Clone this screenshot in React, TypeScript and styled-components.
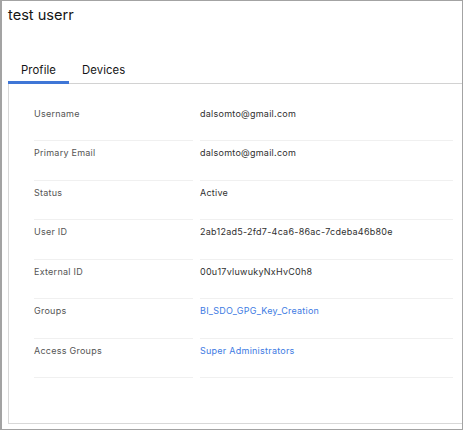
import React from "react";
import styled, { createGlobalStyle } from "styled-components";

const GlobalStyle = createGlobalStyle`
  html, body {
    margin: 0;
    padding: 0;
    background: #ffffff;
  }
  body {
    font-family: Inter, "Noto Sans", "Liberation Sans", sans-serif;
    color: #151515;
  }
`;

const Frame = styled.div`
  box-sizing: border-box;
  width: 463px;
  height: 430px;
  border: 1px solid #a3a3a3;
  border-left-width: 2px;
  overflow: hidden;
  display: flex;
  flex-direction: column;
  padding: 0 0 5px 6px;
`;

const Title = styled.h1`
  margin: 0;
  padding: 3px 0 0 0;
  font-size: 14.6px;
  font-weight: 400;
  line-height: 22px;
  color: #151515;
`;

const TabBar = styled.div`
  display: flex;
  margin-top: 35px;
  border-bottom: 1px solid #d2d2d2;
`;

const Tab = styled.button<{ $active?: boolean }>`
  appearance: none;
  background: none;
  border: none;
  margin: 0 0 -1px 0;
  padding: 0 13px 2px;
  font-family: inherit;
  font-size: 11.3px;
  letter-spacing: 0.1px;
  line-height: 18px;
  color: #151515;
  border-bottom: 3px solid ${(p) => (p.$active ? "#3f76d6" : "transparent")};
  cursor: pointer;
`;

const Card = styled.div`
  flex: 1;
  border-left: 1px solid #d8d8d8;
  border-bottom: 1px solid #d8d8d8;
  padding: 17.5px 9px 0 25px;
`;

const Details = styled.dl`
  margin: 0;
  display: grid;
  grid-template-columns: 159px 1fr;
  column-gap: 7px;
`;

const Label = styled.dt`
  padding: 4px 0 18.5px;
  line-height: 16px;
  font-size: 9px;
  letter-spacing: 0.25px;
  color: #555555;
  border-bottom: 1px solid #f0f0f0;
`;

const Value = styled.dd<{ $link?: boolean }>`
  margin: 0;
  padding: 4px 0 18.5px;
  line-height: 16px;
  font-size: 9px;
  letter-spacing: 0.25px;
  color: ${(p) => (p.$link ? "#3d7be3" : "#2f2f2f")};
  border-bottom: 1px solid #f0f0f0;
`;

const rows: { label: string; value: string; link?: boolean }[] = [
  { label: "Username", value: "dalsomto@gmail.com" },
  { label: "Primary Email", value: "dalsomto@gmail.com" },
  { label: "Status", value: "Active" },
  { label: "User ID", value: "2ab12ad5-2fd7-4ca6-86ac-7cdeba46b80e" },
  { label: "External ID", value: "00u17vluwukyNxHvC0h8" },
  { label: "Groups", value: "BI_SDO_GPG_Key_Creation", link: true },
  { label: "Access Groups", value: "Super Administrators", link: true },
];

export default function App() {
  return (
    <>
      <GlobalStyle />
      <Frame>
        <Title>test userr</Title>
        <TabBar>
          <Tab $active>Profile</Tab>
          <Tab>Devices</Tab>
        </TabBar>
        <Card>
          <Details>
            {rows.map((r) => (
              <React.Fragment key={r.label}>
                <Label>{r.label}</Label>
                <Value $link={r.link}>{r.value}</Value>
              </React.Fragment>
            ))}
          </Details>
        </Card>
      </Frame>
    </>
  );
}
